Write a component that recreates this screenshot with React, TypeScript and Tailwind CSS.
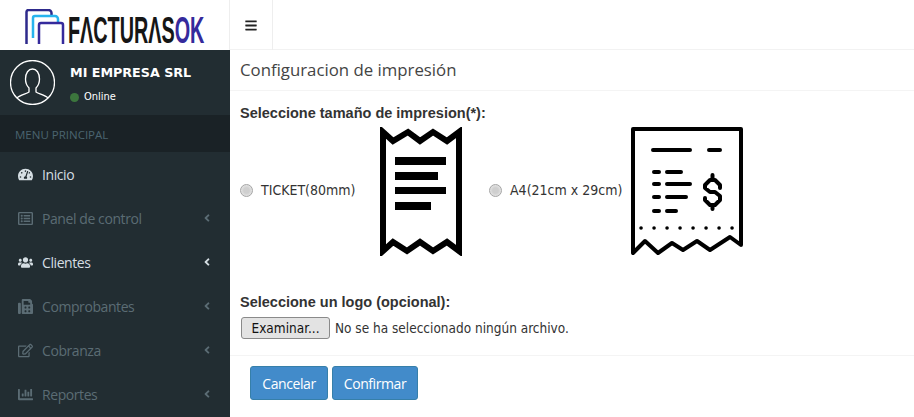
import { FaAngleLeft, FaBars, FaChartBar, FaFax, FaRegEdit, FaRegListAlt, FaTachometerAlt, FaUsers } from "react-icons/fa";
import type { IconType } from "react-icons";

const menu: { label: string; icon: IconType; active?: boolean; arrow?: boolean }[] = [
  { label: "Inicio", icon: FaTachometerAlt, active: true },
  { label: "Panel de control", icon: FaRegListAlt, arrow: true },
  { label: "Clientes", icon: FaUsers, active: true, arrow: true },
  { label: "Comprobantes", icon: FaFax, arrow: true },
  { label: "Cobranza", icon: FaRegEdit, arrow: true },
  { label: "Reportes", icon: FaChartBar, arrow: true },
];

function Logo() {
  return (
    <div className="flex h-[50px] w-[229px] shrink-0 items-start overflow-hidden bg-white pl-[25px] pt-[9px]">
      <svg width="40" height="36" viewBox="0 0 40 36" fill="none" className="shrink-0">
        <path d="M1.500 35V3a2 2 0 0 1 2-2h20a3 3 0 0 1 3 3v3" stroke="#2e2a8c" strokeWidth="2.500" />
        <path d="M8 29V9a2 2 0 0 1 2-2h20a3 3 0 0 1 3 3v3" stroke="#27b4ee" strokeWidth="2.500" />
        <path d="M14 35V16a2 2 0 0 1 2-2h20a2 2 0 0 1 2 2v19" stroke="#352a9c" strokeWidth="2.500" />
      </svg>
      <div className="ml-[3px] mt-[4px] w-[136px] origin-left scale-x-[0.55] whitespace-nowrap font-['Liberation_Sans',sans-serif] text-[36px] font-bold leading-[36px] text-[#161616]">
        FΛCTURΛS<span className="text-[#352a9c]">OK</span>
      </div>
    </div>
  );
}

function Sidebar() {
  return (
    <aside className="flex w-[230px] shrink-0 flex-col overflow-hidden bg-[#222d32]">
      <div className="flex h-[65px] shrink-0 items-start pl-[10px] pt-[10px]">
        <svg width="45" height="45" viewBox="0 0 45 45" fill="none" stroke="white" strokeWidth="1.300" className="shrink-0">
          <circle cx="22.500" cy="22.500" r="22" />
          <path d="M7 38c3-3 9-4 12-6v-4c-2-2-3.500-5-3.500-9 0-6 3-10 7-10s7 4 7 10c0 4-1.500 7-3.500 9v4c3 2 9 3 12 6" />
        </svg>
        <div className="ml-[15px] flex flex-col">
          <span className="mt-[3px] font-['DejaVu_Sans',sans-serif] text-[12.700px] font-bold leading-[20px] text-white">MI EMPRESA SRL</span>
          <span className="mt-[6px] flex items-center font-['DejaVu_Sans_Condensed','Open_Sans',sans-serif] text-[11px] leading-[16px] text-white">
            <span className="mr-[5px] h-[9px] w-[9px] rounded-full bg-[#3c763d]" />
            Online
          </span>
        </div>
      </div>
      <div className="flex h-[37px] shrink-0 items-center bg-[#1a2226] pl-[15px] pt-[3px] font-['Open_Sans',sans-serif] text-[11.500px] text-[#4b646f]">
        MENU PRINCIPAL
      </div>
      <nav className="flex flex-col">
        {menu.map((item) => {
          const Icon = item.icon;
          return (
            <div
              key={item.label}
              className={`flex h-[44px] shrink-0 items-center pl-[18px] pr-[19px] font-['Open_Sans',sans-serif] text-[14px] tracking-[-0.42px] ${item.active ? "text-[#d5dee3]" : "text-[#5b6c74]"}`}
            >
              <Icon className="h-[15px] w-[15px] shrink-0" />
              <span className="ml-[9px] flex-1">{item.label}</span>
              {item.arrow && <FaAngleLeft className="h-[12px] w-[8px]" />}
            </div>
          );
        })}
      </nav>
    </aside>
  );
}

function TicketIcon() {
  return (
    <svg width="82" height="129" viewBox="0 0 82 129" fill="none" className="shrink-0">
      <path d="M3 5 V124 L13 115 L27 124 L40 115 L53 124 L67 115 L79 124 V5 L67 14 L53 5 L40 14 L28 5 L13 14 Z" stroke="black" strokeWidth="6" />
      <rect x="15" y="30" width="51" height="8" fill="black" />
      <rect x="15" y="45" width="43" height="8" fill="black" />
      <rect x="15" y="60" width="51" height="7" fill="black" />
      <rect x="15" y="75" width="36" height="8" fill="black" />
    </svg>
  );
}

function InvoiceIcon() {
  return (
    <svg width="112" height="129" viewBox="0 0 112 129" fill="none" stroke="black" strokeWidth="4" strokeLinecap="round" strokeLinejoin="round" className="shrink-0">
      <path d="M2 126 V2 H110 V118 L99 110 L79 123 L66 114 L52 123 L41 116 L27 126 L14 114 Z" />
      <path d="M22 23 H59 M78 23 H89" />
      <path d="M23 45 H28 M36 45 H50 M23 57 H28 M36 57 H59 M23 70 H28 M36 70 H55 M23 84 H28 M36 84 H45" />
      <path d="M89 61 V58 L84 53 H79 L74 58 V61 L79 65 H84 L89 69 V73 L84 78 H79 L74 73 V71 M81.500 48 V53 M81.500 78 V82" />
      <path d="M10 101 H10.100 M23 101 H23.100 M36 101 H36.100 M49 101 H49.100 M62 101 H62.100 M75 101 H75.100 M88 101 H88.100 M101 101 H101.100" strokeWidth="3.500" />
    </svg>
  );
}

function Radio({ name, label }: { name: string; label: string }) {
  return (
    <label className="flex items-center">
      <input
        type="radio"
        name="size"
        value={name}
        className="h-[13px] w-[13px] appearance-none rounded-full border border-[#a5a5a5] bg-[radial-gradient(circle_at_50%_50%,#cfcfcf_35%,#f3f3f3_100%)]"
      />
      <span className="ml-[8px]">{label}</span>
    </label>
  );
}

export default function App() {
  return (
    <div className="flex h-[417px] w-[914px] flex-col overflow-hidden bg-white font-['Open_Sans',sans-serif] text-[#333]">
      <header className="flex h-[50px] shrink-0 border-b border-[#f2f2f2]">
        <Logo />
        <button className="flex h-[50px] w-[44px] items-center justify-center border-x border-[#eeeeee] text-[#222]">
          <FaBars className="h-[13px] w-[12px]" />
        </button>
      </header>

      <div className="flex min-h-0 flex-1">
        <Sidebar />
        <main className="min-w-0 flex-1">
          <h1 className="flex h-[41px] items-center border-b border-[#f4f4f4] pl-[10px] text-[16.800px] text-[#444]">
            Configuracion de impresión
          </h1>
          <div className="pl-[10px] pt-[12px]">
            <div className="font-['Liberation_Sans',sans-serif] text-[14.500px] font-bold leading-[20px]">
              Seleccione tamaño de impresion(*):
            </div>
            <div className="flex h-[133px] font-['DejaVu_Sans_Condensed','Liberation_Sans',sans-serif] text-[14px]">
              <div className="flex w-[140px] shrink-0 items-center pt-[1px]">
                <Radio name="ticket" label="TICKET(80mm)" />
              </div>
              <div className="self-end">
                <TicketIcon />
              </div>
              <div className="ml-[27px] flex w-[142px] shrink-0 items-center pt-[1px]">
                <Radio name="a4" label="A4(21cm x 29cm)" />
              </div>
              <div className="self-end">
                <InvoiceIcon />
              </div>
            </div>
            <div className="mt-[36px] font-['Liberation_Sans',sans-serif] text-[14.500px] font-bold leading-[20px]">
              Seleccione un logo (opcional):
            </div>
            <div className="mt-[5px] flex items-center font-['DejaVu_Sans_Condensed','Liberation_Sans',sans-serif] text-[13.500px]">
              <button className="ml-[1px] h-[22px] w-[89px] rounded-[3px] border border-[#8a8a8a] bg-[#e3e3e3] text-[#111]">
                Examinar...
              </button>
              <span className="ml-[5px]">No se ha seleccionado ningún archivo.</span>
            </div>
          </div>
          <div className="mt-[16px] flex gap-[4px] border-t border-[#f4f4f4] pl-[20px] pt-[10px] font-['Open_Sans',sans-serif] text-[14px] tracking-[-0.42px] text-white">
            <button className="h-[34px] w-[78px] rounded-[3px] border border-[#367fa9] bg-[#428bca]">Cancelar</button>
            <button className="h-[34px] w-[86px] rounded-[3px] border border-[#367fa9] bg-[#428bca]">Confirmar</button>
          </div>
        </main>
      </div>
    </div>
  );
}
